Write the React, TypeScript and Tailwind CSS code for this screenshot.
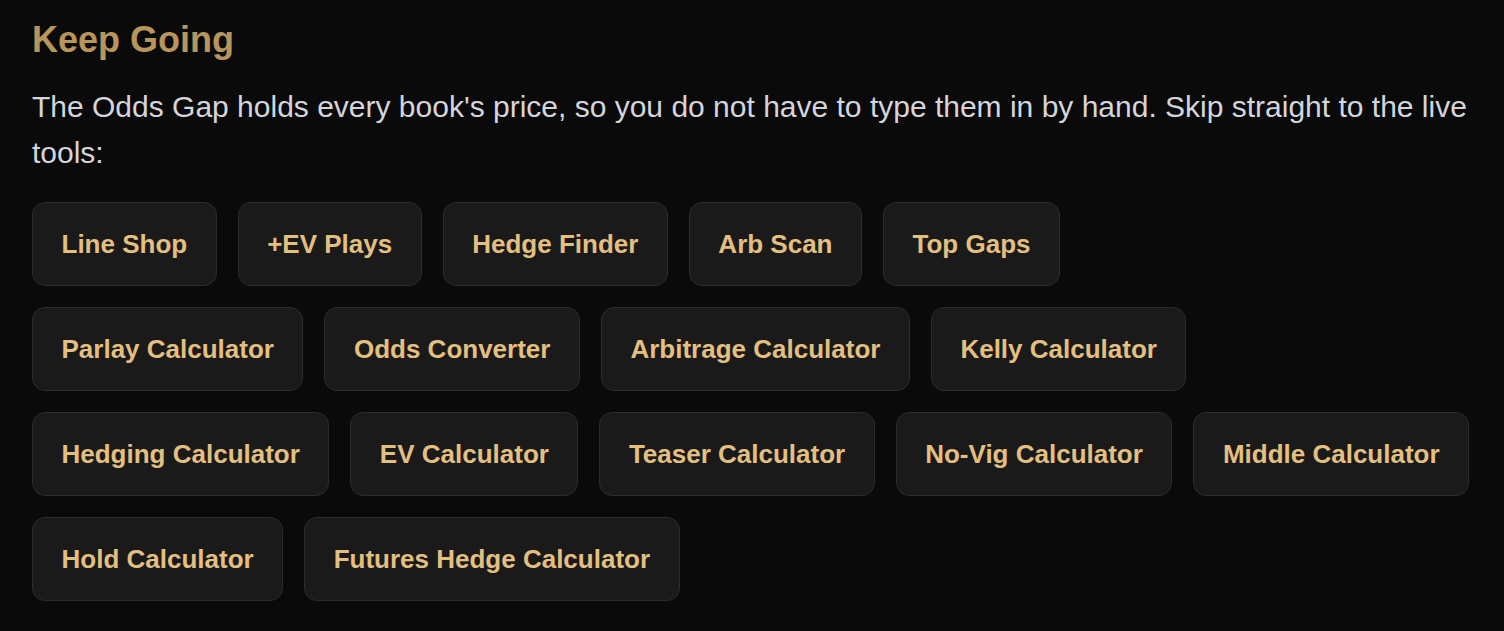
import React from 'react';

const toolRows: string[][] = [
  ['Line Shop', '+EV Plays', 'Hedge Finder', 'Arb Scan', 'Top Gaps'],
  ['Parlay Calculator', 'Odds Converter', 'Arbitrage Calculator', 'Kelly Calculator'],
  ['Hedging Calculator', 'EV Calculator', 'Teaser Calculator', 'No-Vig Calculator', 'Middle Calculator'],
  ['Hold Calculator', 'Futures Hedge Calculator'],
];

function ToolLink({ label }: { label: string }) {
  return (
    <a
      href="#"
      className="inline-flex shrink-0 items-center whitespace-nowrap rounded-[13px] border border-[#2c2c2c] bg-[#1a1a1a] px-[28.5px] py-[26px] text-[26px] font-bold leading-[30px] text-[#e3bf80] hover:border-[#4a4a4a] transition-colors"
    >
      {label}
    </a>
  );
}

export default function App() {
  return (
    <div className="min-h-screen bg-[#0a0a0a] px-8 pt-[14px] font-['Liberation_Sans',Arial,sans-serif]">
      <h2 className="text-[36px] font-bold leading-[52px] text-[#b8955a]">Keep Going</h2>

      <p className="mt-[18px] text-[30px] leading-[46px] text-[#d5d5dc]">
        The Odds Gap holds every book's price, so you do not have to type them in by hand. Skip straight to the live tools:
      </p>

      {/* Tool shortcuts */}
      <div className="mt-[26px] flex flex-col gap-[21px]">
        {toolRows.map((row, i) => (
          <div key={i} className="flex flex-nowrap gap-[21px]">
            {row.map((label) => (
              <ToolLink key={label} label={label} />
            ))}
          </div>
        ))}
      </div>
    </div>
  );
}
